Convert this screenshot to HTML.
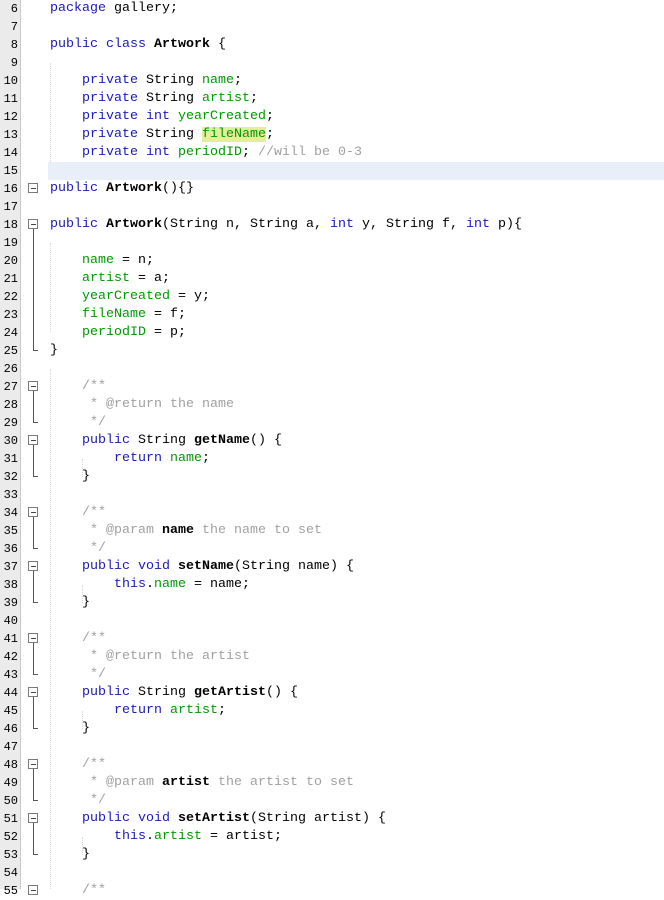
<!DOCTYPE html>
<html><head><meta charset="utf-8"><style>
body{margin:0;width:664px;height:889px;overflow:hidden;background:#fff;position:relative;font-family:"Liberation Mono","Courier New",monospace;font-size:13.33px}
.g{position:absolute;left:0;top:0;width:20px;height:889px;background:#ebebeb;border-right:1px solid #c8c8c8}
.w{position:absolute;left:0;top:1px;width:664px;height:889px}
.n{position:absolute;left:0;width:18px;text-align:right;height:18px;line-height:18px;color:#000;font-size:12px}
.l{position:absolute;left:50px;height:18px;line-height:18px;white-space:pre;color:#000}
.k{color:#1a1ab8}.f{color:#009900}.c{color:#a0a0a0}.b{font-weight:bold}
.hl{position:absolute;left:48px;width:616px;height:18px;background:#e9eff8}
.box{position:absolute;left:28px;width:8px;height:8px;border:1px solid #7a7a7a;background:#fff}
.box:after{content:"";position:absolute;left:2px;top:4px;width:5px;height:1px;background:#444}
.v{position:absolute;left:33px;width:1px;background:#555}
.e{position:absolute;left:33px;width:5px;height:1px;background:#555}
.dg{position:absolute;border-left:1px dotted #d8d8d8}
</style></head><body>
<div class="g"></div>
<div class="w">
<div class="hl" style="top:161px"></div>
<div class="dg" style="left:50px;top:62px;height:100px"></div>
<div class="dg" style="left:50px;top:242px;height:90px"></div>
<div class="dg" style="left:50px;top:368px;height:520px"></div>
<div class="dg" style="left:82px;top:458px;height:18px"></div>
<div class="dg" style="left:82px;top:584px;height:18px"></div>
<div class="dg" style="left:82px;top:710px;height:18px"></div>
<div class="dg" style="left:82px;top:836px;height:18px"></div>

<div class="n" style="top:-1px">6</div><div class="l" style="top:-1px"><span class="k">package</span> gallery;</div>
<div class="n" style="top:17px">7</div>
<div class="n" style="top:35px">8</div><div class="l" style="top:35px"><span class="k">public class</span> <span class="b">Artwork</span> {</div>
<div class="n" style="top:53px">9</div>
<div class="n" style="top:71px">10</div><div class="l" style="top:71px">    <span class="k">private</span> String <span class="f">name</span>;</div>
<div class="n" style="top:89px">11</div><div class="l" style="top:89px">    <span class="k">private</span> String <span class="f">artist</span>;</div>
<div class="n" style="top:107px">12</div><div class="l" style="top:107px">    <span class="k">private int</span> <span class="f">yearCreated</span>;</div>
<div class="n" style="top:125px">13</div><div class="l" style="top:125px">    <span class="k">private</span> String <span class="f" style="background:#e4ee9a">fileName</span>;</div>
<div class="n" style="top:143px">14</div><div class="l" style="top:143px">    <span class="k">private int</span> <span class="f">periodID</span>; <span class="c">//will be 0-3</span></div>
<div class="n" style="top:161px">15</div>
<div class="n" style="top:179px">16</div><div class="l" style="top:179px"><span class="k">public</span> <span class="b">Artwork</span>(){}</div>
<div class="n" style="top:197px">17</div>
<div class="n" style="top:215px">18</div><div class="l" style="top:215px"><span class="k">public</span> <span class="b">Artwork</span>(String n, String a, <span class="k">int</span> y, String f, <span class="k">int</span> p){</div>
<div class="n" style="top:233px">19</div>
<div class="n" style="top:251px">20</div><div class="l" style="top:251px">    <span class="f">name</span> = n;</div>
<div class="n" style="top:269px">21</div><div class="l" style="top:269px">    <span class="f">artist</span> = a;</div>
<div class="n" style="top:287px">22</div><div class="l" style="top:287px">    <span class="f">yearCreated</span> = y;</div>
<div class="n" style="top:305px">23</div><div class="l" style="top:305px">    <span class="f">fileName</span> = f;</div>
<div class="n" style="top:323px">24</div><div class="l" style="top:323px">    <span class="f">periodID</span> = p;</div>
<div class="n" style="top:341px">25</div><div class="l" style="top:341px">}</div>
<div class="n" style="top:359px">26</div>
<div class="n" style="top:377px">27</div><div class="l" style="top:377px">    <span class="c">/**</span></div>
<div class="n" style="top:395px">28</div><div class="l" style="top:395px">    <span class="c"> * @return the name</span></div>
<div class="n" style="top:413px">29</div><div class="l" style="top:413px">    <span class="c"> */</span></div>
<div class="n" style="top:431px">30</div><div class="l" style="top:431px">    <span class="k">public</span> String <span class="b">getName</span>() {</div>
<div class="n" style="top:449px">31</div><div class="l" style="top:449px">        <span class="k">return</span> <span class="f">name</span>;</div>
<div class="n" style="top:467px">32</div><div class="l" style="top:467px">    }</div>
<div class="n" style="top:485px">33</div>
<div class="n" style="top:503px">34</div><div class="l" style="top:503px">    <span class="c">/**</span></div>
<div class="n" style="top:521px">35</div><div class="l" style="top:521px">    <span class="c"> * @param </span><span class="b">name</span><span class="c"> the name to set</span></div>
<div class="n" style="top:539px">36</div><div class="l" style="top:539px">    <span class="c"> */</span></div>
<div class="n" style="top:557px">37</div><div class="l" style="top:557px">    <span class="k">public void</span> <span class="b">setName</span>(String name) {</div>
<div class="n" style="top:575px">38</div><div class="l" style="top:575px">        <span class="k">this</span>.<span class="f">name</span> = name;</div>
<div class="n" style="top:593px">39</div><div class="l" style="top:593px">    }</div>
<div class="n" style="top:611px">40</div>
<div class="n" style="top:629px">41</div><div class="l" style="top:629px">    <span class="c">/**</span></div>
<div class="n" style="top:647px">42</div><div class="l" style="top:647px">    <span class="c"> * @return the artist</span></div>
<div class="n" style="top:665px">43</div><div class="l" style="top:665px">    <span class="c"> */</span></div>
<div class="n" style="top:683px">44</div><div class="l" style="top:683px">    <span class="k">public</span> String <span class="b">getArtist</span>() {</div>
<div class="n" style="top:701px">45</div><div class="l" style="top:701px">        <span class="k">return</span> <span class="f">artist</span>;</div>
<div class="n" style="top:719px">46</div><div class="l" style="top:719px">    }</div>
<div class="n" style="top:737px">47</div>
<div class="n" style="top:755px">48</div><div class="l" style="top:755px">    <span class="c">/**</span></div>
<div class="n" style="top:773px">49</div><div class="l" style="top:773px">    <span class="c"> * @param </span><span class="b">artist</span><span class="c"> the artist to set</span></div>
<div class="n" style="top:791px">50</div><div class="l" style="top:791px">    <span class="c"> */</span></div>
<div class="n" style="top:809px">51</div><div class="l" style="top:809px">    <span class="k">public void</span> <span class="b">setArtist</span>(String artist) {</div>
<div class="n" style="top:827px">52</div><div class="l" style="top:827px">        <span class="k">this</span>.<span class="f">artist</span> = artist;</div>
<div class="n" style="top:845px">53</div><div class="l" style="top:845px">    }</div>
<div class="n" style="top:863px">54</div>
<div class="n" style="top:881px">55</div><div class="l" style="top:881px">    <span class="c">/**</span></div>

<div class="box" style="top:182px"></div>
<div class="box" style="top:218px"></div><div class="v" style="top:228px;height:121px"></div><div class="e" style="top:349px"></div>
<div class="box" style="top:380px"></div><div class="v" style="top:390px;height:31px"></div><div class="e" style="top:421px"></div>
<div class="box" style="top:434px"></div><div class="v" style="top:444px;height:31px"></div><div class="e" style="top:475px"></div>
<div class="box" style="top:506px"></div><div class="v" style="top:516px;height:31px"></div><div class="e" style="top:547px"></div>
<div class="box" style="top:560px"></div><div class="v" style="top:570px;height:31px"></div><div class="e" style="top:601px"></div>
<div class="box" style="top:632px"></div><div class="v" style="top:642px;height:31px"></div><div class="e" style="top:673px"></div>
<div class="box" style="top:686px"></div><div class="v" style="top:696px;height:31px"></div><div class="e" style="top:727px"></div>
<div class="box" style="top:758px"></div><div class="v" style="top:768px;height:31px"></div><div class="e" style="top:799px"></div>
<div class="box" style="top:812px"></div><div class="v" style="top:822px;height:31px"></div><div class="e" style="top:853px"></div>
<div class="box" style="top:884px"></div>
</div>
</body></html>
